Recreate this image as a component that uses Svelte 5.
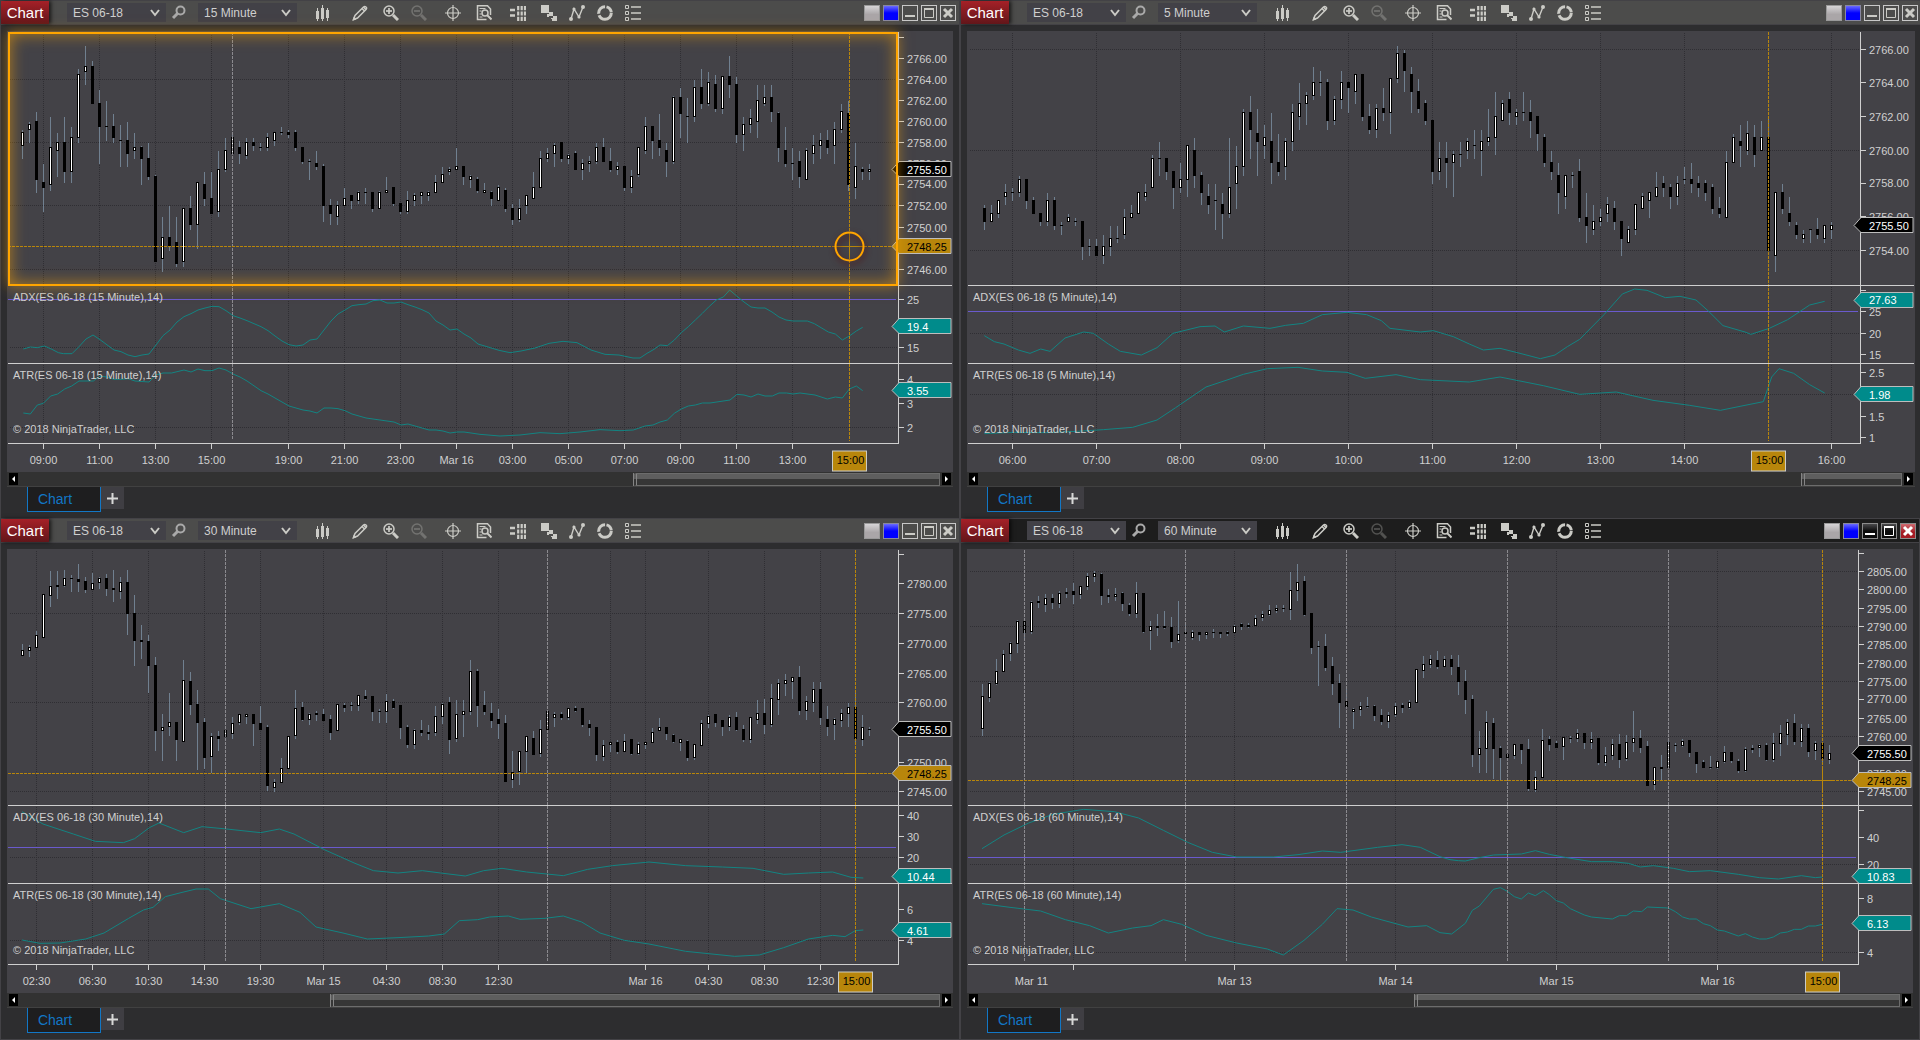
<script>
	const tools = [
		{ name: 'bars', label: 'Chart style', gap: 'first' },
		{ name: 'draw', label: 'Drawing tools', gap: 'far' },
		{ name: 'zoomIn', label: 'Zoom in', gap: 'near' },
		{ name: 'zoomOut', label: 'Zoom out', gap: '' },
		{ name: 'cross', label: 'Crosshair', gap: 'mid' },
		{ name: 'data', label: 'Data box', gap: 'near' },
		{ name: 'depth', label: 'Market depth', gap: 'mid' },
		{ name: 'trader', label: 'Chart trader', gap: 'near' },
		{ name: 'indicators', label: 'Indicators', gap: '' },
		{ name: 'strategies', label: 'Strategies', gap: '' },
		{ name: 'props', label: 'Properties', gap: '' }
	];

	// All coordinates are in thirds of a pixel.
	// Bars: high, body top, body bottom, low. "+" is an up close, "-" a down close.
	const charts = [
		{
			period: '15 Minute',
			width: 891,
			top: 11,
			height: 413,
			first: 67,
			panes: [265, 343, 423],
			grid: [130, 298, 466, 634, 865, 1033, 1201, 1369, 1537, 1705, 1873, 2041, 2209, 2377],
			rows: [178, 367, 556, 748, 982, 1222],
			sessions: [697],
			level: 838,
			cursor: { x: 2548, y: 679 },
			focus: true,
			thumb: 66.6,
			times: [
				['09:00', 130], ['11:00', 298], ['13:00', 466], ['15:00', 634], ['19:00', 865], ['21:00', 1033], ['23:00', 1201],
				['Mar 16', 1369], ['03:00', 1537], ['05:00', 1705], ['07:00', 1873], ['09:00', 2041], ['11:00', 2209], ['13:00', 2377]
			],
			ticks: [
				['', 52], ['2766.00', 116], ['2764.00', 179], ['2762.00', 242], ['2760.00', 305], ['2758.00', 368], ['2756.00', 431],
				['2754.00', 494], ['2752.00', 557], ['2750.00', 622], ['2746.00', 749],
				['25', 838], ['15', 982], ['4', 1078], ['3', 1151], ['2', 1222]
			],
			tags: [['2755.50', 449, 'last'], ['2748.25', 679, 'cursor'], ['19.4', 919, 'study'], ['3.55', 1111, 'study']],
			bars: `+330 336 378 417,+306 312 330 369,-276 303 480 519,-432 486 504 576,+291 381 495 513,+339 366 393 471,-291 366 456 489,
				+321 351 456 489,+147 162 354 369,+78 138 156 195,-123 138 252 252,-210 249 321 432,-243 318 321 363,-282 318 354 369,
				-315 360 363 441,-306 360 402 441,+339 381 393 417,-378 381 417 495,-369 414 471 480,-465 468 726 726,+591 651 717 756,
				-558 651 680 693,-591 666 732 741,+564 564 726 741,-528 564 615 630,+486 486 615 687,-456 492 537 558,-456 534 582 582,
				+393 447 576 591,+354 390 450 456,+336 351 402 402,-363 381 402 432,+354 366 408 417,-354 366 378 393,-369 381 384 393,
				+339 351 384 393,+336 336 363 378,-321 336 339 345,-330 336 345 354,-330 336 384 393,-381 381 426 432,-417 423 426 480,
				-393 429 441 450,-432 438 558 606,-537 555 582 615,+543 555 591 615,+504 534 558 558,-525 525 543 567,+513 516 543 552,
				-504 516 519 552,-516 516 567 576,+513 516 567 567,+471 510 519 519,-501 501 552 558,-549 549 576 582,+513 540 576 582,
				+519 525 543 558,+516 516 528 552,+513 516 528 543,+465 486 519 519,+441 462 489 489,+441 447 456 465,+384 438 450 450,
				-438 438 471 495,+465 468 480 504,-471 477 513 519,+489 510 519 519,-513 516 537 558,+495 501 543 543,-504 510 567 576,
				-552 564 600 615,+537 564 600 606,+525 525 558 582,+456 501 537 537,+393 414 504 504,+384 399 417 426,+369 375 402 441,
				-366 366 417 426,+402 405 417 432,-393 399 450 450,+417 429 450 480,+408 423 432 456,+369 381 426 432,-354 381 426 426,
				-384 423 450 456,+426 438 450 465,-438 438 504 513,+450 468 504 519,+381 381 465 471,+291 318 393 402,-318 318 363 417,
				-282 360 384 408,-369 390 426 471,+228 231 426 432,-204 231 282 354,-234 288 291 369,+180 201 291 306,-147 201 252 267,
				+156 186 252 258,-165 192 267 276,+168 168 267 282,-108 168 195 234,-171 192 345 369,+291 312 345 393,+267 294 315 339,
				+195 240 306 354,+195 231 252 258,-195 231 276 306,-276 279 384 426,-321 390 432 441,-384 429 432 480,-393 423 471 504,
				+384 390 480 480,+345 375 402 432,+339 360 378 417,-330 360 384 402,+306 327 378 432,+252 273 330 339,-243 279 495 513,
				+369 438 504 537,-441 447 456 480,+432 447 456 480`,
			adx: `70,987 91,981 112,983 133,978 154,987 175,998 190,1001 216,1001 237,980 258,957 279,945 300,959 342,990 363,995 384,1005
				405,1010 426,1005 447,1002 468,975 489,947 510,930 531,906 552,890 573,881 594,870 615,864 636,859 657,860 678,872 699,887
				720,894 741,902 762,911 783,920 804,932 825,948 846,963 867,974 888,978 909,975 930,960 951,957 972,930 993,903 1014,882
				1035,870 1056,857 1077,854 1098,852 1119,842 1140,840 1161,849 1182,849 1203,846 1224,854 1245,861 1266,869 1287,879
				1308,903 1329,915 1350,930 1371,927 1392,942 1413,954 1434,972 1464,981 1497,991 1530,998 1563,993 1605,984 1647,970
				1689,964 1731,968 1773,990 1815,1003 1857,1005 1899,1014 1920,1014 1941,1000 1962,988 1980,975 2002,977 2023,960
				2044,938 2065,920 2086,900 2107,880 2128,859 2149,840 2170,831 2189,810 2210,828 2232,846 2253,861 2274,864 2295,864
				2316,876 2337,891 2358,900 2379,903 2422,903 2443,911 2485,936 2506,942 2527,960 2548,948 2569,933 2588,922`,
			atr: `70,1179 91,1182 112,1155 130,1150 152,1128 173,1122 194,1107 215,1098 237,1083 280,1083 300,1068 320,1071 342,1078
				363,1078 384,1076 405,1083 447,1086 468,1065 489,1059 515,1059 552,1050 573,1056 594,1047 615,1052 636,1052 657,1044
				678,1050 699,1062 720,1071 741,1083 783,1112 804,1122 867,1158 888,1164 909,1170 930,1173 951,1179 972,1164 993,1164
				1014,1166 1035,1172 1056,1182 1098,1194 1119,1197 1182,1206 1203,1215 1224,1212 1245,1218 1287,1230 1308,1230
				1329,1233 1350,1239 1371,1236 1392,1236 1413,1239 1440,1243 1500,1248 1560,1245 1620,1238 1680,1241 1740,1236
				1800,1229 1860,1232 1900,1230 1935,1218 1959,1215 1980,1206 2002,1200 2023,1180 2044,1167 2065,1158 2086,1155
				2107,1149 2130,1149 2190,1140 2211,1123 2232,1125 2253,1131 2274,1122 2295,1128 2317,1128 2337,1119 2360,1119
				2379,1122 2400,1119 2445,1125 2482,1137 2506,1131 2527,1134 2548,1107 2569,1098 2588,1112`
		},
		{
			period: '5 Minute',
			width: 893,
			top: 11,
			height: 413,
			first: 73,
			panes: [265, 343, 423],
			grid: [157, 409, 661, 913, 1165, 1417, 1669, 1921, 2173, 2614],
			rows: [88, 391, 691, 939, 1123],
			sessions: [],
			level: 875,
			cursor: { x: 2425 },
			wide: true,
			thumb: 89,
			times: [
				['06:00', 157], ['07:00', 409], ['08:00', 661], ['09:00', 913], ['10:00', 1165], ['11:00', 1417], ['12:00', 1669],
				['13:00', 1921], ['14:00', 2173], ['16:00', 2614]
			],
			ticks: [
				['2766.00', 88], ['2764.00', 188], ['2762.00', 289], ['2760.00', 391], ['2758.00', 490], ['2756.00', 590], ['2754.00', 691],
				['', 810], ['25', 875], ['20', 939], ['15', 1002], ['2.5', 1057], ['1.5', 1189], ['1', 1251]
			],
			tags: [['2755.50', 616, 'last'], ['27.63', 840, 'study'], ['1.98', 1123, 'study']],
			bars: `-555 564 606 630,+555 579 606 606,+540 540 582 594,+492 516 531 555,-504 516 519 543,+468 477 519 531,-477 477 543 567,
				-531 540 582 582,-579 579 606 618,+519 540 606 618,-531 540 618 630,-606 615 618 645,+582 591 606 606,-594 603 606 618,
				-603 603 681 720,-657 678 681 708,-657 678 708 708,+645 678 708 732,+618 654 681 708,-618 654 657 669,+567 591 645 657,
				+555 579 594 594,+516 516 582 582,+492 516 531 543,+405 414 504 504,-366 414 417 468,-414 414 456 480,-453 453 504 567,
				+429 477 504 519,+375 375 480 531,-354 390 468 504,-456 465 519 555,-492 528 555 582,-492 540 543 630,-519 552 582 657,
				+354 501 582 594,+378 438 492 567,+267 276 441 468,-228 276 330 417,-267 339 366 468,+315 351 378 417,-279 363 429 492,
				-342 426 456 468,+354 363 441 480,+252 276 366 393,+189 249 291 330,+216 225 252 315,+141 186 228 240,-153 186 189 228,
				-177 186 303 330,+228 237 303 315,+153 186 240 267,-186 186 204 279,+162 162 216 252,-162 162 291 303,-252 288 330 342,
				+252 264 330 354,-204 264 279 303,+174 174 279 342,+78 99 177 189,-90 99 153 216,-141 162 216 279,-177 213 267 279,
				-240 249 303 315,-300 300 456 492,+366 414 456 480,-366 414 429 504,+393 402 429 531,-366 402 405 441,+354 363 393 417,
				-330 375 378 417,+330 363 393 468,+267 351 366 378,+216 288 354 405,+240 249 303 303,-216 237 279 315,+267 276 291 315,
				-216 276 279 303,-240 276 303 354,-288 288 342 393,-342 351 429 441,-393 426 456 480,-429 465 519 582,+465 465 531 567,
				-456 465 468 504,-417 453 594 606,-519 591 618 669,+555 603 630 645,+567 591 606 618,+531 552 582 606,-543 564 606 630,
				-603 603 657 708,+618 627 669 669,+552 552 630 645,+519 528 567 567,+516 516 543 594,+456 501 531 531,-468 489 504 531,
				-492 501 531 567,+468 489 531 555,-441 477 480 492,-429 477 492 519,-468 489 504 531,-480 489 519 543,-492 501 567 582,
				-531 564 582 594,+393 426 594 594,+342 351 429 429,-315 363 378 441,+303 339 393 405,-315 351 405 441,+303 351 393 393,
				-291 351 693 693,+516 516 708 756,-492 516 567 582,-531 579 606 618,-606 615 645 657,+630 642 657 669,-627 627 630 669,
				-594 627 645 657,+615 615 657 669,+606 615 630 657`,
			adx: `73,947 103,965 132,972 175,990 210,1000 242,987 270,994 315,954 371,936 400,940 445,972 481,994 544,1005 591,983 639,940
				720,920 765,918 793,936 850,918 930,925 977,916 1030,910 1087,884 1161,877 1220,884 1264,902 1290,925 1381,936 1420,932
				1480,950 1528,972 1570,990 1620,985 1680,1000 1741,1016 1785,1005 1822,980 1859,958 1932,884 1987,822 2024,807 2061,811
				2116,833 2160,829 2208,840 2245,873 2289,917 2355,936 2373,943 2428,925 2483,899 2549,855 2594,844`,
			atr: `73,1241 160,1237 260,1238 350,1234 430,1229 518,1222 591,1200 647,1163 738,1101 804,1079 850,1063 922,1046 1014,1042
				1087,1053 1161,1057 1216,1075 1308,1064 1381,1079 1528,1086 1620,1071 1675,1082 1750,1097 1859,1123 1969,1116
				2079,1141 2189,1156 2281,1171 2355,1156 2410,1145 2435,1071 2457,1046 2501,1060 2549,1094 2594,1119`
		},
		{
			period: '30 Minute',
			width: 891,
			top: 39,
			height: 416,
			first: 67,
			panes: [295, 373, 454],
			grid: [109, 277, 445, 613, 781, 970, 1159, 1327, 1495, 1831, 1936, 2125, 2293, 2461],
			rows: [310, 577, 844, 1041, 1291],
			sessions: [676, 1642],
			level: 1012,
			cursor: { x: 2566, y: 790 },
			thumb: 33.7,
			times: [
				['02:30', 109], ['06:30', 277], ['10:30', 445], ['14:30', 613], ['19:30', 781], ['Mar 15', 970], ['04:30', 1159],
				['08:30', 1327], ['12:30', 1495], ['Mar 16', 1936], ['04:30', 2125], ['08:30', 2293], ['12:30', 2461]
			],
			ticks: [
				['', 133], ['2780.00', 221], ['2775.00', 310], ['2770.00', 401], ['2765.00', 490], ['2760.00', 577], ['2750.00', 757],
				['2745.00', 844], ['40', 917], ['30', 979], ['20', 1041], ['6', 1198], ['4', 1291]
			],
			tags: [['2755.50', 658, 'last'], ['2748.25', 790, 'cursor'], ['10.44', 1100, 'study'], ['4.61', 1262, 'study']],
			bars: `+402 420 438 438,+405 411 423 441,+363 375 414 414,+252 252 384 384,+183 228 258 291,-183 225 231 267,+180 204 228 231,
				-195 204 207 246,-162 207 216 246,-201 213 240 249,+189 219 240 240,+201 204 219 237,-192 204 237 258,-180 234 240 276,
				+201 216 246 267,-180 216 312 375,-255 309 393 468,-345 390 396 447,-375 393 468 549,-441 465 663 723,+612 651 663 753,
				+549 636 651 678,-636 636 690 753,+450 510 696 696,-486 513 585 615,-540 582 639 780,-624 636 744 777,+669 678 741 789,
				-663 678 687 723,+660 660 681 681,+621 639 672 687,+612 612 639 645,+612 612 621 642,-612 612 642 708,-588 639 660 660,
				-645 651 828 843,+807 816 834 846,+744 774 819 819,+678 678 777 777,+540 594 678 687,-576 591 630 633,+609 612 630 645,
				-603 609 615 633,-597 612 633 633,-615 627 669 690,+582 582 663 663,-579 585 594 606,-576 585 588 603,+555 555 588 603,
				-540 558 567 570,-558 558 606 633,-597 603 606 639,+552 573 606 639,-567 573 594 597,-585 585 654 687,-645 651 705 714,
				+657 660 705 717,-630 660 669 678,-645 666 672 690,+588 618 669 678,+579 582 621 642,-561 576 690 732,+570 612 687 696,
				+570 603 615 681,+450 483 606 615,-477 483 588 651,-543 585 606 615,-579 609 633 654,-597 627 642 687,-615 639 816 816,
				+723 786 810 834,+723 723 786 825,+678 678 726 789,-663 684 735 735,+630 657 732 741,+603 603 660 660,+606 612 624 651,
				-606 612 624 630,+594 594 624 630,-588 594 603 606,-594 594 645 651,-630 642 654 678,-651 651 735 753,+690 705 741 753,
				+696 696 705 726,-690 696 726 732,+672 693 726 726,-687 687 732 735,+696 702 732 735,+696 696 705 717,+654 666 699 699,
				+624 651 663 663,-651 651 672 690,-672 675 696 699,+687 687 699 723,-690 693 744 753,+702 702 744 750,+630 639 708 708,
				+615 618 642 654,-612 612 639 651,-630 630 651 678,+615 621 651 663,-606 621 660 663,-645 657 690 696,+621 621 690 699,
				+570 609 630 642,-567 609 645 672,+522 564 645 651,+507 519 570 615,+492 510 522 558,+501 501 516 567,-468 501 603 615,
				+558 573 603 630,+516 537 579 606,-516 537 624 645,-588 627 651 678,+624 627 645 690,+597 609 633 651,+579 591 612 651,
				-540 591 687 696,+615 651 690 708,-651 657 660 678`,
			adx: `66,905 129,942 220,972 286,994 370,998 404,986 448,953 477,939 551,968 606,950 680,957 782,968 838,957 882,972 973,1019
				1065,1060 1120,1082 1194,1089 1267,1082 1322,1089 1396,1098 1451,1082 1506,1075 1580,1086 1690,1097 1763,1078
				1837,1067 1947,1056 2057,1067 2167,1071 2259,1075 2351,1093 2425,1089 2498,1086 2553,1102 2590,1104`,
			atr: `66,1290 120,1300 180,1299 257,1287 312,1269 386,1225 430,1200 459,1192 496,1160 543,1148 588,1137 625,1137 661,1166
				753,1196 838,1181 900,1207 948,1251 1029,1269 1102,1287 1194,1283 1286,1278 1333,1272 1378,1232 1433,1229 1469,1221
				1525,1218 1560,1228 1635,1225 1690,1218 1745,1236 1800,1269 1873,1291 1947,1302 2057,1324 2204,1339 2278,1335
				2351,1313 2425,1287 2498,1276 2535,1280 2566,1262 2590,1260`
		},
		{
			period: '60 Minute',
			width: 891,
			top: 39,
			height: 416,
			first: 67,
			panes: [295, 373, 454],
			grid: [340, 823, 1306, 1789, 2272],
			rows: [184, 349, 514, 679, 844, 1063, 1328],
			sessions: [193, 676, 1159, 1642, 2125],
			level: 1042,
			cursor: { x: 2587, y: 811 },
			active: true,
			thumb: 47.2,
			times: [['Mar 11', 215], ['', 340], ['Mar 13', 823], ['Mar 14', 1306], ['Mar 15', 1789], ['Mar 16', 2272]],
			ticks: [
				['', 131], ['2805.00', 184], ['2800.00', 239], ['2795.00', 295], ['2790.00', 349], ['2785.00', 404], ['2780.00', 460],
				['2775.00', 514], ['2770.00', 569], ['2765.00', 625], ['2760.00', 679], ['2750.00', 789], ['2745.00', 844],
				['', 901], ['40', 983], ['20', 1063], ['8', 1166], ['4', 1328]
			],
			tags: [['2755.50', 731, 'last'], ['2748.25', 811, 'cursor'], ['10.83', 1099, 'study'], ['6.13', 1241, 'study']],
			bars: `+522 558 657 678,+516 519 564 576,+447 483 522 525,+420 432 486 486,+396 399 432 453,+330 333 402 429,-333 333 369 390,
				+273 276 366 372,-258 273 279 294,+252 264 285 306,-252 264 279 297,+243 249 282 294,-234 246 252 264,-219 243 255 282,
				+228 228 255 267,+189 198 231 240,+183 189 201 216,-189 192 258 285,-237 255 261 279,+234 252 261 273,-246 249 282 303,
				-279 285 312 318,+216 249 312 324,-249 249 366 369,+333 348 363 420,-312 348 354 378,-303 348 354 357,-321 351 396 414,
				+273 372 393 399,-345 366 372 372,+360 366 384 390,-366 366 375 393,+366 366 375 387,-357 366 369 384,-366 366 372 384,
				-363 366 372 378,+345 348 369 369,-339 342 351 360,-339 345 351 354,+315 324 348 348,+303 312 324 333,+285 300 315 318,
				+285 294 303 309,-285 294 297 306,+186 240 300 330,+162 216 243 273,-198 213 315 318,-309 309 414 432,-393 408 411 528,
				-372 408 474 483,-441 468 522 555,-492 519 579 654,-534 573 591 594,+594 597 606 657,+576 588 600 618,-561 588 591 594,
				-585 588 618 633,-597 615 636 645,+606 615 636 654,+579 588 615 621,-579 585 594 609,+570 576 594 597,+477 477 579 579,
				+438 462 483 504,+435 447 465 474,-423 450 471 477,+438 447 471 471,-435 447 471 495,-435 471 516 555,-480 513 570 613,
				-555 567 735 771,+663 714 735 789,+603 636 717 789,-624 639 717 807,-708 714 744 810,+732 732 744 744,+702 702 738 747,
				-702 702 720 762,-687 717 837 843,+783 801 840 846,+657 690 804 804,-678 687 705 723,-693 699 714 714,+681 681 711 750,
				-678 684 687 699,+657 669 687 696,-669 669 699 717,+666 687 699 717,-684 684 759 765,+711 735 759 768,+687 702 738 750,
				-672 702 750 774,+675 696 747 753,+603 684 699 726,-660 684 714 729,-693 708 828 828,+771 771 825 840,-735 771 777 813,
				+693 696 774 774,-699 705 708 726,+687 693 708 711,-690 690 729 741,-726 726 762 789,-750 756 774 774,-738 771 774 777,
				+753 753 774 777,+708 726 756 759,-726 726 753 759,-747 753 783 789,+711 717 783 786,-705 714 720 729,+702 705 714 741,
				-699 705 750 753,+669 699 750 756,+645 669 702 738,+627 636 675 705,-612 639 696 705,+642 654 696 711,-642 654 726 741,
				+693 699 723 750,-699 699 747 756,+705 729 750 762`,
			adx: `66,1016 132,975 206,939 279,913 371,898 463,905 536,924 610,961 683,997 757,1027 830,1041 940,1041 1014,1034 1087,1023
				1142,1027 1253,1012 1326,1004 1381,1012 1440,1040 1470,1049 1495,1052 1516,1053 1558,1043 1600,1035 1684,1032
				1726,1022 1768,1033 1820,1043 1894,1055 1957,1055 2005,1060 2041,1071 2080,1067 2140,1075 2188,1085 2251,1082
				2335,1093 2398,1103 2455,1107 2524,1097 2566,1103 2587,1101`,
			atr: `66,1181 150,1192 242,1203 316,1229 389,1247 445,1269 518,1254 573,1247 610,1229 665,1243 738,1276 830,1299 922,1317
				970,1335 1032,1291 1087,1243 1131,1196 1179,1200 1234,1221 1344,1251 1400,1247 1440,1268 1475,1272 1516,1240
				1537,1201 1558,1188 1600,1138 1621,1133 1642,1144 1663,1160 1684,1167 1705,1149 1726,1157 1750,1142 1768,1154
				1789,1172 1810,1179 1831,1196 1873,1215 1894,1221 1957,1227 1978,1217 1999,1217 2020,1203 2045,1205 2062,1191
				2125,1194 2146,1205 2168,1221 2188,1227 2209,1227 2230,1241 2251,1247 2272,1260 2293,1263 2335,1278 2356,1271
				2377,1281 2398,1287 2419,1287 2440,1281 2461,1269 2482,1266 2503,1258 2524,1258 2545,1248 2566,1248 2587,1243`
		}
	];

	const edge = (v) => Math.round(v / 3);
	const mid = (v) => Math.floor(v / 3) + 0.5;

	function parseBars(chart) {
		return chart.bars.split(',').map((text, i) => {
			const bar = text.trim();
			const [high, top, bottom, low] = bar.slice(1).split(' ').map((v) => edge(Number(v)));
			return { up: bar[0] === '+', x: mid(chart.first + i * 21), high, top, bottom, low };
		});
	}

	function parseLine(text) {
		return text
			.trim()
			.split(/\s+/)
			.map((point) => point.split(',').map((v) => Number(v) / 3).join(','))
			.join(' ');
	}

	// Percent positions keep labels in place when the plot is stretched
	const across = (chart, v) => `${((mid(v) - 7) / chart.width) * 100}%`;
	const down = (chart, v) => `${((mid(v) - chart.top) / chart.height) * 100}%`;
</script>

{#snippet icon(name)}
	<svg class="icon" viewBox="0 0 16 16" width="16" height="16" aria-hidden="true">
		{#if name === 'bars'}
			<path class="solid" d="M1 6h1V3h1v3h1v8H3v2H2v-2H1zM6 3h1V0h1v3h1v11H8v2H7v-2H6zM11 5h1V3h1v2h1v8h-1v3h-1v-3h-1z" />
		{:else if name === 'draw'}
			<path d="M1.500 14.500l1.500-4L11.500 2q1.300-1 2.500 0t0 2.500L5.500 13z" stroke-width="1.500" />
			<path d="M10 3.500l2.700 2.700M11.500 2l2.600 2.600" stroke-width="1.500" />
			<path class="solid" d="M.5 15.700l1.200-4 2.700 2.700z" />
		{:else if name === 'zoomIn' || name === 'zoomOut'}
			<circle cx="6" cy="6" r="5" stroke-width="1.500" />
			<path d="M10 10l5 5" stroke-width="3" />
			<path d="M3 6h6" stroke-width="1.700" />
			{#if name === 'zoomIn'}<path d="M6 3v6" stroke-width="1.700" />{/if}
		{:else if name === 'cross'}
			<circle cx="8" cy="8" r="5.500" stroke-width="1.200" />
			<path d="M8 0v16M0 8h16" stroke-width="1.200" />
		{:else if name === 'data'}
			<path d="M14.500 10V4l-3-3.200H1.500v13.700h9" stroke-width="1.500" />
			<path d="M3.500 3.500h6M3.500 6h2M3.500 9h2M3.500 12h3" />
			<circle cx="9" cy="8" r="3" stroke-width="1.500" />
			<path d="M11 10l4.500 4.500" stroke-width="2" />
		{:else if name === 'depth'}
			<path d="M0 5h5M0 10.500h5" stroke-width="2.500" />
			<path d="M8.200 1v15M11.700 1v15M15 1v15" stroke-width="2.200" stroke-dasharray="4.200 1.200" />
		{:else if name === 'trader'}
			<path class="solid" d="M0 0h8v8H0zM6 9h2V7h4v4H8v1H6zM10 13h2v-2h4v5h-5v-2h-1z" />
		{:else if name === 'indicators'}
			<path d="M2 14L5 4l5 8 4-10" stroke-width="1.400" />
			<circle class="solid" cx="2" cy="14" r="2" />
			<circle class="solid" cx="5" cy="4" r="1.600" />
			<circle class="solid" cx="10" cy="12" r="1.600" />
			<circle class="solid" cx="14" cy="2" r="2" />
		{:else if name === 'strategies'}
			<circle cx="8" cy="8" r="6.300" stroke-width="3" stroke-dasharray="17 1.500 10.500 1.500 7.500 1.600" />
		{:else if name === 'props'}
			<path d="M.5.500h3v3h-3zM.5 6.500h3v3h-3zM.5 12.500h3v3h-3z" />
			<path d="M6 2h10M6 8h10M6 14h10" stroke-width="1.500" />
		{/if}
	</svg>
{/snippet}

{#snippet dropdown(label, value)}
	<label class="dropdown">
		<select aria-label={label}>
			<option>{value}</option>
		</select>
		<svg viewBox="0 0 10 8" width="10" height="8" aria-hidden="true"><path d="M1 1l4 5 4-5" /></svg>
	</label>
{/snippet}

<main class="desktop">
	{#each charts as chart}
		<section class="window" class:active={chart.active} class:wide={chart.wide}>
			<header class="titlebar">
				<h2>Chart</h2>
				{@render dropdown('Instrument', 'ES 06-18')}
				<button class="search" aria-label="Find instrument">
					<svg viewBox="0 0 16 16" width="16" height="16">
						<circle cx="9.500" cy="5.500" r="4" stroke-width="2" />
						<path d="M6.500 8.500L2 13" stroke-width="3" />
					</svg>
				</button>
				{@render dropdown('Interval', chart.period)}
				<nav class="tools">
					{#each tools as tool}
						<button class="tool {tool.gap}" disabled={tool.name === 'zoomOut'} aria-label={tool.label}>
							{@render icon(tool.name)}
						</button>
					{/each}
				</nav>
				<div class="controls">
					<button class="swatch silver" aria-label="Instrument link"></button>
					<button class="swatch blue" aria-label="Interval link"></button>
					<button class="control" aria-label="Minimize">
						<svg viewBox="0 0 16 16"><path d="M3 11h10" stroke-width="2" /></svg>
					</button>
					<button class="control" aria-label="Maximize">
						<svg viewBox="0 0 16 16"><path d="M3.500 4v8.500h9V4" /><path d="M3 4h10" stroke-width="2" /></svg>
					</button>
					<button class="control close" aria-label="Close">
						<svg viewBox="0 0 16 16"><path d="M4 4l8 8M12 4l-8 8" stroke-width="3" /></svg>
					</button>
				</div>
			</header>

			<div class="panel">
				<div class="stage">
					<svg class="plot">
						<svg
							width="100%"
							height="100%"
							viewBox="7 {chart.top} {chart.width} {chart.height}"
							preserveAspectRatio="none"
						>
							{#each chart.grid as x}
								<line class="grid" x1={mid(x)} x2={mid(x)} y1={chart.top + 2} y2={chart.panes[2] - 3} />
							{/each}
							{#each chart.rows as y}
								<line class="grid" x1="10" x2={chart.width + 6} y1={mid(y)} y2={mid(y)} />
							{/each}

							{#each parseBars(chart) as bar}
								<line class="wick" x1={bar.x} x2={bar.x} y1={bar.high} y2={bar.low} />
								<rect x={bar.x - 1.5} y={bar.top} width="3" height={bar.bottom - bar.top} />
								{#if bar.up}
									<rect class="up" x={bar.x - 0.5} y={bar.top + 1} width="1" height={Math.max(bar.bottom - bar.top - 2, 1)} />
								{/if}
							{/each}

							<line class="level" x1="8" x2={chart.width + 5} y1={mid(chart.level)} y2={mid(chart.level)} />
							<polyline class="study" points={parseLine(chart.adx)} />
							<polyline class="study" points={parseLine(chart.atr)} />

							{#each chart.sessions as x}
								<line class="session" x1={mid(x)} x2={mid(x)} y1={chart.top + 1} y2={chart.panes[2] - 3} />
							{/each}
							<line class="cursor" x1={mid(chart.cursor.x)} x2={mid(chart.cursor.x)} y1={chart.top + 1} y2={chart.panes[2] - 2} />
							{#if chart.cursor.y}
								{@const x = mid(chart.cursor.x)}
								{@const y = mid(chart.cursor.y)}
								<line class="cursor" x1="8" x2={chart.width} y1={y} y2={y} />
								<path class="hair" d="M{x - 10.5} {y}h21M{x} {y - 12.5}v25" />
							{/if}
							{#each chart.panes as y}
								<line class="divider" x1="8" x2={chart.width + 7} y1={y + 0.5} y2={y + 0.5} />
							{/each}
						</svg>
						<text class="caption" x="6" y={down(chart, chart.panes[0] * 3)} dy="15">ADX(ES 06-18 ({chart.period}),14)</text>
						<text class="caption" x="6" y={down(chart, chart.panes[1] * 3)} dy="15">ATR(ES 06-18 ({chart.period}),14)</text>
						<text class="caption" x="6" y={down(chart, chart.panes[2] * 3)} dy="-11">© 2018 NinjaTrader, LLC</text>
						{#if chart.focus}
							<circle class="spot" cx={across(chart, chart.cursor.x)} cy={down(chart, chart.cursor.y)} r="14" />
						{/if}
					</svg>

					<svg class="axis">
						<line class="divider" x1="0.5" x2="0.5" y1="1" y2="100%" />
						{#each chart.ticks as [label, y]}
							<line class="divider" x1="1" x2="6" y1={down(chart, y)} y2={down(chart, y)} />
							<text x="9" y={down(chart, y)} dy="4">{label}</text>
						{/each}
						{#each chart.tags as [label, y, kind]}
							<svg class="tag {kind}" x="0" y={down(chart, y)}>
								<polygon points="-6,0 1,-8 53,-8 53,7 1,7" />
								<text x="9" y="4">{label}</text>
							</svg>
						{/each}
						{#each chart.panes.slice(0, 2) as y}
							<line class="divider" x1="0" x2="54" y1={down(chart, y * 3)} y2={down(chart, y * 3)} />
						{/each}
					</svg>
					{#if chart.focus}
						<div class="highlight" style="height: {((chart.panes[0] - chart.top) / chart.height) * 100}%"></div>
					{/if}
				</div>

				<svg class="times">
					{#each chart.times as [label, x]}
						{#if !label || x !== 215}
							<line class="divider" x1={across(chart, x)} x2={across(chart, x)} y1="0" y2="5" />
						{/if}
						<text x={across(chart, x)} y="20">{label}</text>
					{/each}
					<svg class="now" x={across(chart, chart.cursor.x)}>
						<rect x="-17" y="7" width="34" height="20" />
						<text x="1" y="20">15:00</text>
					</svg>
				</svg>
			</div>

			<div class="scrollbar">
				<button aria-label="Scroll left"><svg viewBox="0 0 9 12"><path d="M6 3v6L3 6z" /></svg></button>
				<div class="track">
					<div class="thumb" style="margin-left: {chart.thumb}%"></div>
				</div>
				<button aria-label="Scroll right"><svg viewBox="0 0 9 12"><path d="M3 3v6l3-3z" /></svg></button>
			</div>

			<footer class="tabs">
				<button class="tab">Chart</button>
				<button class="add" aria-label="Add tab">
					<svg viewBox="0 0 11 11" width="11" height="11"><path d="M5.500 0v11M0 5.500h11" /></svg>
				</button>
			</footer>
		</section>
	{/each}
</main>

<style>
	:global(body) {
		margin: 0;
		background: #2d2d2f;
	}

	.desktop {
		display: grid;
		grid-template-columns: 1fr 1fr;
		grid-template-rows: 518fr 521fr;
		box-sizing: border-box;
		min-height: 100vh;
		padding-bottom: 1px;
		overflow: hidden;
		background: #434246;
		font-family: 'Liberation Sans', Arial, sans-serif;
		color: #d0d0d0;
	}

	button {
		padding: 0;
		border: none;
		background: none;
		color: inherit;
		font-family: inherit;
	}

	svg {
		display: block;
		fill: none;
		stroke: #cbcbc6;
	}

	text {
		fill: #d0d0d0;
		stroke: none;
		font-size: 11px;
	}

	.window {
		display: flex;
		flex-direction: column;
		min-width: 0;
		border: solid #434246;
		border-width: 1px 1px 0;
		background: #2d2d2f;
	}

	.window.wide {
		margin-right: -2px;
	}

	/* Title bar */
	.titlebar {
		display: flex;
		align-items: center;
		height: 23px;
		border-bottom: 1px solid #434246;
		background: #4c4c4b;
	}

	.active .titlebar {
		background: #1d1d1d;
	}

	h2 {
		width: 48px;
		margin: 0 18px 0 0;
		background: linear-gradient(#a52027, #62161a);
		box-shadow: 2px 0 4px rgba(0, 0, 0, 0.7);
		color: #fff;
		font-size: 15px;
		font-weight: 400;
		line-height: 23px;
		text-align: center;
	}

	.dropdown {
		display: grid;
		align-items: center;
		width: 99px;
		height: 19px;
		background: #424147;
	}

	.dropdown select {
		grid-area: 1 / 1;
		height: 19px;
		padding: 0 6px;
		border: none;
		background: none;
		color: #cfcfcf;
		font-family: inherit;
		font-size: 12px;
		appearance: none;
	}

	.dropdown svg {
		grid-area: 1 / 1;
		justify-self: end;
		margin-right: 6px;
		stroke-width: 2;
		pointer-events: none;
	}

	.search {
		margin: 0 11px 0 5px;
	}

	.search svg {
		stroke: #a9a9a9;
	}

	.tools {
		display: flex;
		gap: 12px;
	}

	.tool.first {
		margin-left: 18px;
	}

	.tool.near {
		margin-left: 3px;
	}

	.tool.mid {
		margin-left: 6px;
	}

	.tool.far {
		margin-left: 9px;
	}

	.tool:disabled {
		opacity: 0.3;
	}

	.icon .solid {
		fill: #cbcbc6;
		stroke: none;
	}

	.controls {
		display: flex;
		gap: 3px;
		margin-left: auto;
		padding-right: 3px;
	}

	.controls button {
		box-sizing: border-box;
		width: 16px;
		height: 16px;
		border: 1px solid #c8c8c8;
	}

	.controls svg {
		width: 16px;
		height: 16px;
		margin: -1px;
	}

	.controls .silver {
		border-color: #999;
		background: linear-gradient(#d6d4d6, #aaa6a8 60%);
	}

	.controls .blue {
		border-color: #8888a0;
		background: linear-gradient(#6a6aff, #00f 50%);
	}

	.active .control {
		border-color: #8c8c8c;
		background: linear-gradient(#4a4a4c, #0c0c0c 50%);
	}

	.active .control svg {
		stroke: #fff;
	}

	.active .close {
		background: linear-gradient(#cf6a70, #a51c24 60%);
	}

	/* Chart panel */
	.panel {
		display: flex;
		flex: 1;
		flex-direction: column;
		margin: 6px 6px 0;
		background: #434247;
	}

	.stage {
		position: relative;
		display: grid;
		flex: 1;
		grid-template-columns: 1fr 55px;
		min-height: 300px;
	}

	.plot,
	.axis {
		width: 100%;
		height: 100%;
		overflow: visible;
	}

	.plot {
		position: absolute;
		width: calc(100% - 55px);
	}

	.axis {
		grid-column: 2;
		z-index: 1;
	}

	.grid {
		stroke: #2f2e33;
		stroke-dasharray: 1 1;
	}

	.wick {
		stroke: #708090;
	}

	.plot rect {
		fill: #000;
		stroke: none;
		shape-rendering: crispEdges;
	}

	.plot .up {
		fill: #fff;
	}

	.level {
		stroke: #6a5acd;
	}

	.study {
		stroke: #138482;
	}

	.session {
		stroke: #8b8a8f;
		stroke-dasharray: 3 1;
	}

	.cursor {
		stroke: #b8860b;
		stroke-dasharray: 3 1;
	}

	.hair {
		stroke: #b8860b;
	}

	.divider {
		stroke: #cfcfcf;
		shape-rendering: crispEdges;
	}

	.tag {
		overflow: visible;
	}

	.tag polygon {
		stroke: #bdbdbd;
	}

	.tag text {
		fill: #fff;
	}

	.last polygon {
		fill: #000;
	}

	.study polygon {
		fill: #008b8b;
	}

	.cursor polygon,
	.now rect {
		fill: #b8860b;
		stroke-dasharray: none;
	}

	.cursor text,
	.now text {
		fill: #000;
	}

	.highlight {
		position: absolute;
		z-index: 2;
		top: 1px;
		left: 1px;
		right: 55px;
		box-sizing: border-box;
		border: 2px solid #ffa500;
		box-shadow: 0 0 12px rgba(255, 165, 0, 0.5), inset 0 0 16px rgba(255, 165, 0, 0.6);
		pointer-events: none;
	}

	.spot {
		stroke: #ffa500;
		stroke-width: 2;
		filter: drop-shadow(1px 3px 3px #501010);
	}

	.times {
		width: calc(100% - 55px);
		height: 28px;
		overflow: visible;
	}

	.times text {
		text-anchor: middle;
	}

	.now {
		overflow: visible;
	}

	/* Scrollbar and tabs */
	.scrollbar {
		display: flex;
		align-items: center;
		height: 14px;
		margin: 0 6px;
		border-bottom: 1px solid #414141;
		background: #323232;
	}

	.scrollbar button {
		width: 9px;
		height: 12px;
		margin: 0 2px;
		background: #000;
	}

	.scrollbar path {
		fill: #fff;
		stroke: none;
	}

	.track {
		flex: 1;
	}

	.thumb {
		box-sizing: border-box;
		height: 13px;
		border: 1px solid #6c6c6c;
		border-left: 4px double #858585;
		background: linear-gradient(#5e5e5e 45%, #363636 50%);
	}

	.tabs {
		display: flex;
		align-items: flex-start;
		height: 31px;
		padding-left: 26px;
	}

	.tab {
		box-sizing: border-box;
		width: 74px;
		height: 25px;
		padding-right: 18px;
		border: 1px solid #1277c6;
		border-top: none;
		background: #1e1e1f;
		color: #1277c6;
		font-size: 14px;
	}

	.add {
		display: grid;
		place-items: center;
		width: 23px;
		height: 22px;
		background: #3f3e43;
	}

	.add path {
		stroke: #d8d8d8;
		stroke-width: 2;
	}
</style>
